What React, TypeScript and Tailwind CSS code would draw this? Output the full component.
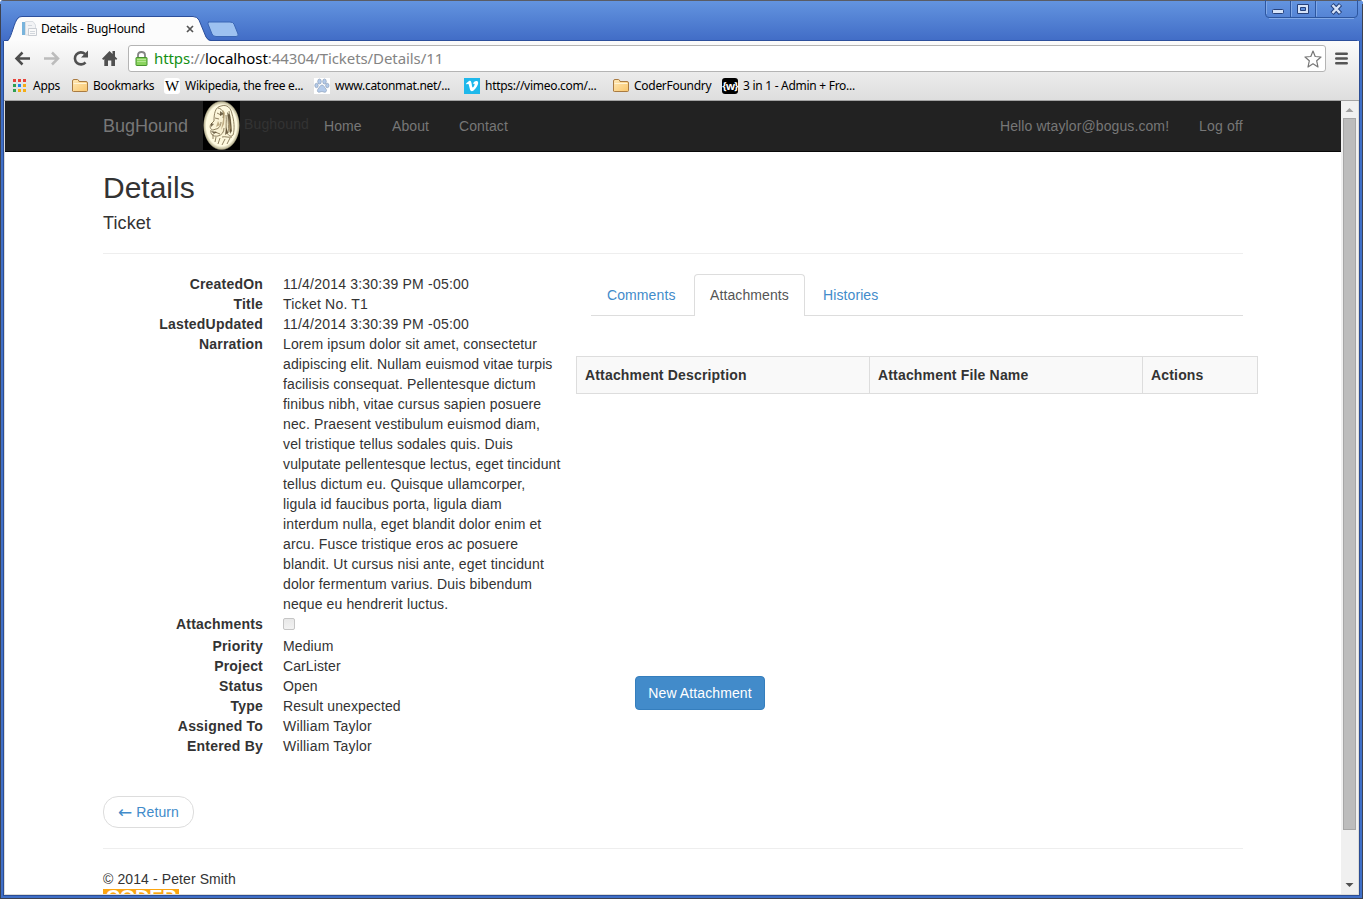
import React from "react";

const narration = [
  "Lorem ipsum dolor sit amet, consectetur",
  "adipiscing elit. Nullam euismod vitae turpis",
  "facilisis consequat. Pellentesque dictum",
  "finibus nibh, vitae cursus sapien posuere",
  "nec. Praesent vestibulum euismod diam,",
  "vel tristique tellus sodales quis. Duis",
  "vulputate pellentesque lectus, eget tincidunt",
  "tellus dictum eu. Quisque ullamcorper,",
  "ligula id faucibus porta, ligula diam",
  "interdum nulla, eget blandit dolor enim et",
  "arcu. Fusce tristique eros ac posuere",
  "blandit. Ut cursus nisi ante, eget tincidunt",
  "dolor fermentum varius. Duis bibendum",
  "neque eu hendrerit luctus.",
];

function Folder() {
  return (
    <svg width="16" height="16" viewBox="0 0 16 16" className="shrink-0">
      <defs>
        <linearGradient id="folder" x1="0" y1="0" x2="1" y2="1">
          <stop offset="0" stopColor="#ffe9b8" />
          <stop offset="1" stopColor="#f9c66b" />
        </linearGradient>
      </defs>
      <path d="M.5 13V3Q.5 1.500 2 1.500H5.500Q6.500 1.500 7 3.500H14Q15.500 3.500 15.500 5V12.500Q15.500 13.500 14.500 13.500H1.500Q.5 13.500 .5 13Z" fill="url(#folder)" stroke="#a97b42" />
      <path d="M1.500 5.500H14.500" stroke="#fff3d4" />
    </svg>
  );
}

function TabStrip() {
  return (
    <div className="relative h-[41px] shrink-0 bg-linear-to-b from-[#6495e0] to-[#416cc6]">
      <svg width="1363" height="41" className="absolute inset-0">
        <path d="M0 .5H1363" stroke="#5a5c64" />
        <path d="M.5 4V41M1362.500 4V41" stroke="#3d4250" />
        <path d="M8 41C12 36 14 22 18 18.500Q19.500 16.500 22 16.500H193Q197 16.500 199 20L206 37Q208 41 211 41Z" fill="#fcfcfc" />
        <path d="M4 40.500H8C12 36 14 22 18 18Q19.500 16.500 22 16.500H193Q197 16.500 199 20L206 37Q208 40.500 211 40.500H1357" fill="none" stroke="#2c4f9c" />
        <path d="M208.500 22H230Q233 22 234 24L238 34Q239 36.500 236 36.500H216Q213 36.500 212 34L208 24Q207.500 22 209 22Z" fill="#9dc1f0" stroke="#3a66b5" />
        <path d="M1265.500 0V14Q1265.500 17.500 1269 17.500H1354Q1357.500 17.500 1357.500 14V0M1290.500 1V17M1315.500 1V17" fill="none" stroke="#2d569f" />
        <path d="M1266.500 1.500V14M1291.500 1.500V16.500M1316.500 1.500V16.500M1269 18.500H1354" stroke="#82a9e7" />
        <rect x="1272.500" y="9.500" width="11" height="4" rx="1" fill="#d6e3f8" stroke="#26417b" />
        <path fillRule="evenodd" d="M1297.500 4.500H1308.500V13.500H1297.500ZM1300.500 7.500V10.500H1305.500V7.500Z" fill="#d6e3f8" stroke="#26417b" />
        <path d="M1332 4.500L1340.500 13.500M1340.500 4.500L1332 13.500" stroke="#26417b" strokeWidth="4.500" />
        <path d="M1332.500 5L1340 13M1340 5L1332.500 13" stroke="#d6e3f8" strokeWidth="2.500" />
      </svg>
      <div className="relative flex h-[41px] items-center pt-[17px] pl-[21px]">
        <svg width="16" height="16" viewBox="0 0 16 16">
          <path d="M1 1H4V14H1Z" fill="#79b4dc" />
          <path d="M4.500 .5H12L14.500 4V14H4.500Z" fill="#f2f3f5" stroke="#d9dde2" />
          <path d="M7.500 7.500H15.500V14.500H7.500Z" fill="#fafafa" stroke="#c9cdd3" />
          <path d="M9 10.500H14M9 12.500H14M7 4.500H11" stroke="#d2d7dd" />
        </svg>
        <span className="ml-[4px] w-[145px] text-[12px] tracking-[-0.32px] text-black">Details - BugHound</span>
        <svg width="8" height="8" viewBox="0 0 8 8"><path d="M1 1L7 7M7 1L1 7" stroke="#555" strokeWidth="1.700" /></svg>
      </div>
    </div>
  );
}

function AddressBar() {
  return (
    <div className="flex h-[35px] items-center pl-[10px]">
      <svg width="108" height="24" viewBox="0 0 108 24" fill="none" className="shrink-0">
        <path d="M2.500 11.500H16M8.500 5.500L2.500 11.500L8.500 17.500" stroke="#4d4d4d" strokeWidth="2.500" />
        <path d="M30 11.500H43.500M38 5.500L44 11.500L38 17.500" stroke="#bcbcbc" strokeWidth="2.500" />
        <path d="M71.500 15.300A6 6 0 1 1 71 7" stroke="#505050" strokeWidth="2.600" />
        <path d="M74 3.500V10.500H67Z" fill="#505050" />
        <path d="M88 11.800L95.500 4L98.500 7V4H101V9.500L103.300 11.800L102 13L101 12V19H97.300V13.500H94V19H90.300V12L89.300 13Z" fill="#505050" />
      </svg>
      <div className="ml-[6px] flex h-[27px] w-[1198px] items-center rounded-[3px] border border-[#b4b4b4] bg-white pl-[6px]">
        <svg width="13" height="18" viewBox="0 0 13 18">
          <path d="M3 8V5Q3 2 6.500 2Q10 2 10 5V8" fill="none" stroke="#858585" strokeWidth="1.800" />
          <rect x="1" y="7.500" width="11" height="8" rx=".5" fill="#8bd45f" stroke="#47932e" />
          <path d="M2 9.500H11M2 11.500H11" stroke="#b3e793" />
        </svg>
        <span className="-mt-[2px] ml-[6px] grow text-[15px] leading-[24px] tracking-[-0.08px] whitespace-pre text-[#848484]">
          <span className="text-[#149014]">https</span>://<span className="text-black">localhost</span>:44304/Tickets/Details/11
        </span>
        <svg width="18" height="18" viewBox="0 0 18 18" className="mr-[3px]">
          <path d="M9 1L11.200 6.500L17 7L12.700 10.800L14 17L9 13.800L4 17L5.300 10.800L1 7L6.800 6.500Z" fill="#fff" stroke="#777" strokeWidth="1.200" strokeLinejoin="round" />
        </svg>
      </div>
      <svg width="13" height="13" viewBox="0 0 13 13" className="ml-[9px]">
        <path d="M1.300 1.700H11.700M1.300 6.500H11.700M1.300 11.300H11.700" stroke="#555" strokeWidth="2.600" strokeLinecap="round" />
      </svg>
    </div>
  );
}

function Bookmark({ icon, label, width }: { icon: React.ReactNode; label: string; width: string }) {
  return (
    <div className={"flex shrink-0 items-center gap-[5px] whitespace-nowrap text-black " + width}>
      {icon}
      <span>{label}</span>
    </div>
  );
}

function BookmarksBar() {
  return (
    <div className="flex h-[24px] items-start pt-[1px] pl-[9px] text-[12px] leading-[18px] tracking-[-0.28px]">
      <Bookmark width="w-[59px]" label="Apps" icon={
        <svg width="15" height="16" viewBox="0 0 15 16" className="shrink-0">
          <path d="M0 1h3v3H0zM5 1h3v3H5zM10 1h3v3h-3z" fill="#e8433a" />
          <path d="M0 6h3v3H0zM0 11h3v3H0z" fill="#2fa052" />
          <path d="M5 6h3v3H5z" fill="#1f87f2" />
          <path d="M10 6h3v3h-3zM5 11h3v3H5zM10 11h3v3h-3z" fill="#f4ad16" />
        </svg>} />
      <Bookmark width="w-[92px]" label="Bookmarks" icon={<Folder />} />
      <Bookmark width="w-[150px]" label="Wikipedia, the free e..." icon={
        <span className="flex size-[16px] shrink-0 items-center justify-center rounded-[3px] bg-white font-['Liberation_Serif',serif] text-[15px] tracking-normal">W</span>} />
      <Bookmark width="w-[150px]" label="www.catonmat.net/..." icon={
        <svg width="16" height="16" viewBox="0 0 16 16" className="shrink-0">
          <path d="M0 0H16V16H0Z" fill="#fff" />
          <g fill="#b4cbea" stroke="#8195b0" strokeWidth=".6">
            <ellipse cx="5.500" cy="3.500" rx="1.800" ry="2.500" /><ellipse cx="10.500" cy="3.500" rx="1.800" ry="2.500" />
            <ellipse cx="2.500" cy="7.500" rx="1.700" ry="2.200" /><ellipse cx="13.300" cy="7.500" rx="1.700" ry="2.200" />
            <path d="M8 7C10 7 10.500 9.500 12 11C13.500 13 11.500 15 9.500 14L8 13.500L6 14C4 15 2.500 13 4 11C5.500 9.500 6 7 8 7Z" />
          </g>
        </svg>} />
      <Bookmark width="w-[149px]" label="https://vimeo.com/..." icon={
        <svg width="16" height="16" viewBox="0 0 16 16" className="shrink-0">
          <path d="M0 0H16V16H0Z" fill="#1eb8eb" />
          <path d="M2 5.500L5 3C7 2 7.500 4 8 8C8.500 10.500 9.500 9.500 10.500 7C11 5.500 10 5.500 9 6C9.500 3.500 11.500 2.500 13 3C15.500 4 13.500 8 11.500 10.500C9.500 13 7 14.500 6 11.500L4.700 6.500C4.300 5.800 3.800 6 2.800 6.500Z" fill="#fff" />
        </svg>} />
      <Bookmark width="w-[109px]" label="CoderFoundry" icon={<Folder />} />
      <Bookmark width="w-[150px]" label="3 in 1 - Admin + Fro..." icon={
        <span className="flex size-[16px] shrink-0 items-center justify-center rounded-[3px] bg-black pb-[1px] text-[11px] font-bold tracking-[-0.9px] text-white">{"{w}"}</span>} />
    </div>
  );
}

function HoundPortrait() {
  return (
    <svg width="37" height="49" viewBox="0 0 37 49" className="-mt-[2px] shrink-0">
      <defs>
        <radialGradient id="oval">
          <stop offset="0" stopColor="#f6edcc" />
          <stop offset=".82" stopColor="#fffbe2" />
          <stop offset=".94" stopColor="#bdb797" />
          <stop offset="1" stopColor="#000" />
        </radialGradient>
      </defs>
      <path d="M0 0H37V49H0Z" fill="#000" />
      <ellipse cx="18.500" cy="24.500" rx="18.500" ry="25" fill="url(#oval)" />
      <g fill="none" stroke="#746342" strokeWidth=".8">
        <path d="M11 20C11 13 12 6 18 5C24 3 28 7 29 13C31 19 32 28 30 34C28 36 25 35 24 31C22 26 24 20 23 14" />
        <path d="M11 20L8 23C6 26 8 29 10 29L13 28C16 28 18 24 18 21M8 29C7 33 10 36 15 35C19 34 21 31 21 27" />
        <path d="M14 12L18 14M12 17L16 18M15 7C20 8 21 12 20 17M26 10C27 17 29 23 27 31M25 14C25 21 26 26 25 32M19 36C22 35 26 37 29 36M10 33V38M13 36L12 41M17 37L15 43M22 38L19 44M27 37L24 43M12 31L17 33" />
      </g>
      <path d="M24 11L27 14L29 30L27 33L26 22ZM8 22L11 23L8 26ZM17 10L21 13L17 15ZM8 30L14 31L11 33ZM23 26L25 32L22 34Z" fill="#54452b" opacity=".8" />
      <path d="M20 9L22 12L21 23L18 29L20 19ZM15 20L17 24L13 26ZM26 18L28 27L26 31Z" fill="#a58e63" opacity=".7" />
    </svg>
  );
}

function Navbar() {
  return (
    <div className="flex h-[51px] items-center border-b border-[#080808] bg-[#222] pl-[98px] text-[14px] leading-[20px] tracking-[0.1px] whitespace-nowrap text-[#777]">
      <span className="w-[100px] text-[18px] tracking-[0px]">BugHound</span>
      <HoundPortrait />
      <span className="-mt-[4px] ml-[4px] w-[80px] tracking-[0.15px] text-[#333]">Bughound</span>
      <span className="w-[68px]">Home</span>
      <span className="w-[67px]">About</span>
      <span className="grow">Contact</span>
      <span className="w-[199px]">Hello wtaylor@bogus.com!</span>
      <span className="w-[142px] tracking-[0.2px]">Log off</span>
    </div>
  );
}

function Row({ label, children }: { label: string; children: React.ReactNode }) {
  return (
    <div className="flex">
      <dt className="w-[160px] shrink-0 text-right font-bold tracking-[0.2px]">{label}</dt>
      <dd className="ml-[20px] whitespace-nowrap">{children}</dd>
    </div>
  );
}

function TicketDetails() {
  return (
    <dl className="w-[473px] shrink-0">
      <Row label="CreatedOn"><span className="tracking-[0.21px]">11/4/2014 3:30:39 PM -05:00</span></Row>
      <Row label="Title"><span className="tracking-[0.2px]">Ticket No. T1</span></Row>
      <Row label="LastedUpdated"><span className="tracking-[0.21px]">11/4/2014 3:30:39 PM -05:00</span></Row>
      <Row label="Narration">
        {narration.map((line) => <span key={line} className="block tracking-[0.13px]">{line}</span>)}
      </Row>
      <Row label="Attachments">
        <span className="mt-[4px] mb-[6px] block size-[12px] rounded-[2px] border border-[#c5c5c5] bg-linear-to-b from-[#e8e8e8] to-[#f2f2f2]" />
      </Row>
      <Row label="Priority">Medium</Row>
      <Row label="Project">CarLister</Row>
      <Row label="Status">Open</Row>
      <Row label="Type">Result unexpected</Row>
      <Row label="Assigned To"><span className="tracking-[0.2px]">William Taylor</span></Row>
      <Row label="Entered By"><span className="tracking-[0.2px]">William Taylor</span></Row>
    </dl>
  );
}

function AttachmentsPanel() {
  return (
    <div className="w-[682px] shrink-0">
      <div className="ml-[15px] flex h-[42px] w-[652px] text-[#428bca]">
        <span className="w-[103px] border-b border-[#ddd] pt-[11px] pl-[16px]">Comments</span>
        <span className="w-[111px] rounded-t-[4px] border border-b-0 border-[#ddd] pt-[10px] pl-[15px] text-[#555]">Attachments</span>
        <span className="grow border-b border-[#ddd] pt-[11px] pl-[18px]">Histories</span>
      </div>
      <div className="mt-[40px] flex h-[38px] items-center border border-[#ddd] bg-[#f9f9f9] font-bold tracking-[0.17px]">
        <span className="flex h-full w-[293px] items-center border-r border-[#ddd] pl-[8px]">Attachment Description</span>
        <span className="flex h-full w-[273px] items-center border-r border-[#ddd] pl-[8px]">Attachment File Name</span>
        <span className="pl-[8px]">Actions</span>
      </div>
      <button className="mt-[282px] ml-[59px] h-[34px] w-[130px] rounded-[4px] border border-[#357ebd] bg-[#428bca] text-white">New Attachment</button>
    </div>
  );
}

function Scrollbar() {
  return (
    <div className="flex w-[17px] shrink-0 flex-col items-center bg-[#f0f0f0]">
      <svg width="17" height="17" viewBox="0 0 17 17" className="shrink-0"><path d="M4.500 11L8.500 7L12.500 11Z" fill="#a0a0a0" /></svg>
      <div className="h-[712px] w-[13px] border border-[#a6a6a6] bg-[#bcbcbc]" />
      <svg width="17" height="17" viewBox="0 0 17 17" className="mt-auto shrink-0"><path d="M4.500 6L8.500 10L12.500 6Z" fill="#505050" /></svg>
    </div>
  );
}

export default function App() {
  return (
    <div className="flex h-[899px] w-[1363px] flex-col overflow-hidden rounded-t-[4px] bg-[#3f6fc7] font-['Noto_Sans','Open_Sans',sans-serif]">
      <TabStrip />
      <div className="flex h-[858px] border-x border-b border-[#3d4250]">
        <div className="ml-[2px] flex h-[855px] w-[1357px] flex-col border-x border-b border-[#2a4c94]">
          <div className="h-[60px] w-[1355px] shrink-0 border-b border-[#a3a3a3] bg-linear-to-b from-[#fbfbfb] to-[#dedede]">
            <AddressBar />
            <BookmarksBar />
          </div>
          <div className="flex h-[794px] w-[1355px] border-b border-l border-[#dcdcd8] bg-white font-['Liberation_Sans',sans-serif]">
            <main className="w-[1336px] shrink-0 overflow-hidden text-[14px] leading-[20px] tracking-[0.1px] text-[#333]">
              <Navbar />
              <div className="w-[1253px] pl-[98px]">
                <h2 className="mt-[19px] text-[30px] leading-[33px] tracking-[0px]">Details</h2>
                <h4 className="mt-[9px] text-[18px] leading-[20px] tracking-[0.1px]">Ticket</h4>
                <hr className="mt-[20px] w-[1140px] border-[#eee]" />
                <div className="mt-[20px] flex">
                  <TicketDetails />
                  <AttachmentsPanel />
                </div>
                <button className="mt-[40px] flex h-[32px] w-[91px] items-center justify-center gap-[4px] rounded-[15px] border border-[#ddd] text-[#428bca]">
                  <span className="font-['DejaVu_Sans',sans-serif] text-[17px] leading-[20px] tracking-normal">←</span>
                  <span>Return</span>
                </button>
                <hr className="mt-[20px] w-[1140px] border-[#eee]" />
                <p className="mt-[20px]">© 2014 - Peter Smith</p>
                <div className="h-[5px] w-[76px] overflow-hidden bg-[#fca510] text-center text-[20px] leading-[17px] font-black tracking-[-0.3px] text-white">CODER</div>
              </div>
            </main>
            <Scrollbar />
            <div className="w-[1px] bg-[#dcdcd8]" />
          </div>
        </div>
      </div>
    </div>
  );
}
